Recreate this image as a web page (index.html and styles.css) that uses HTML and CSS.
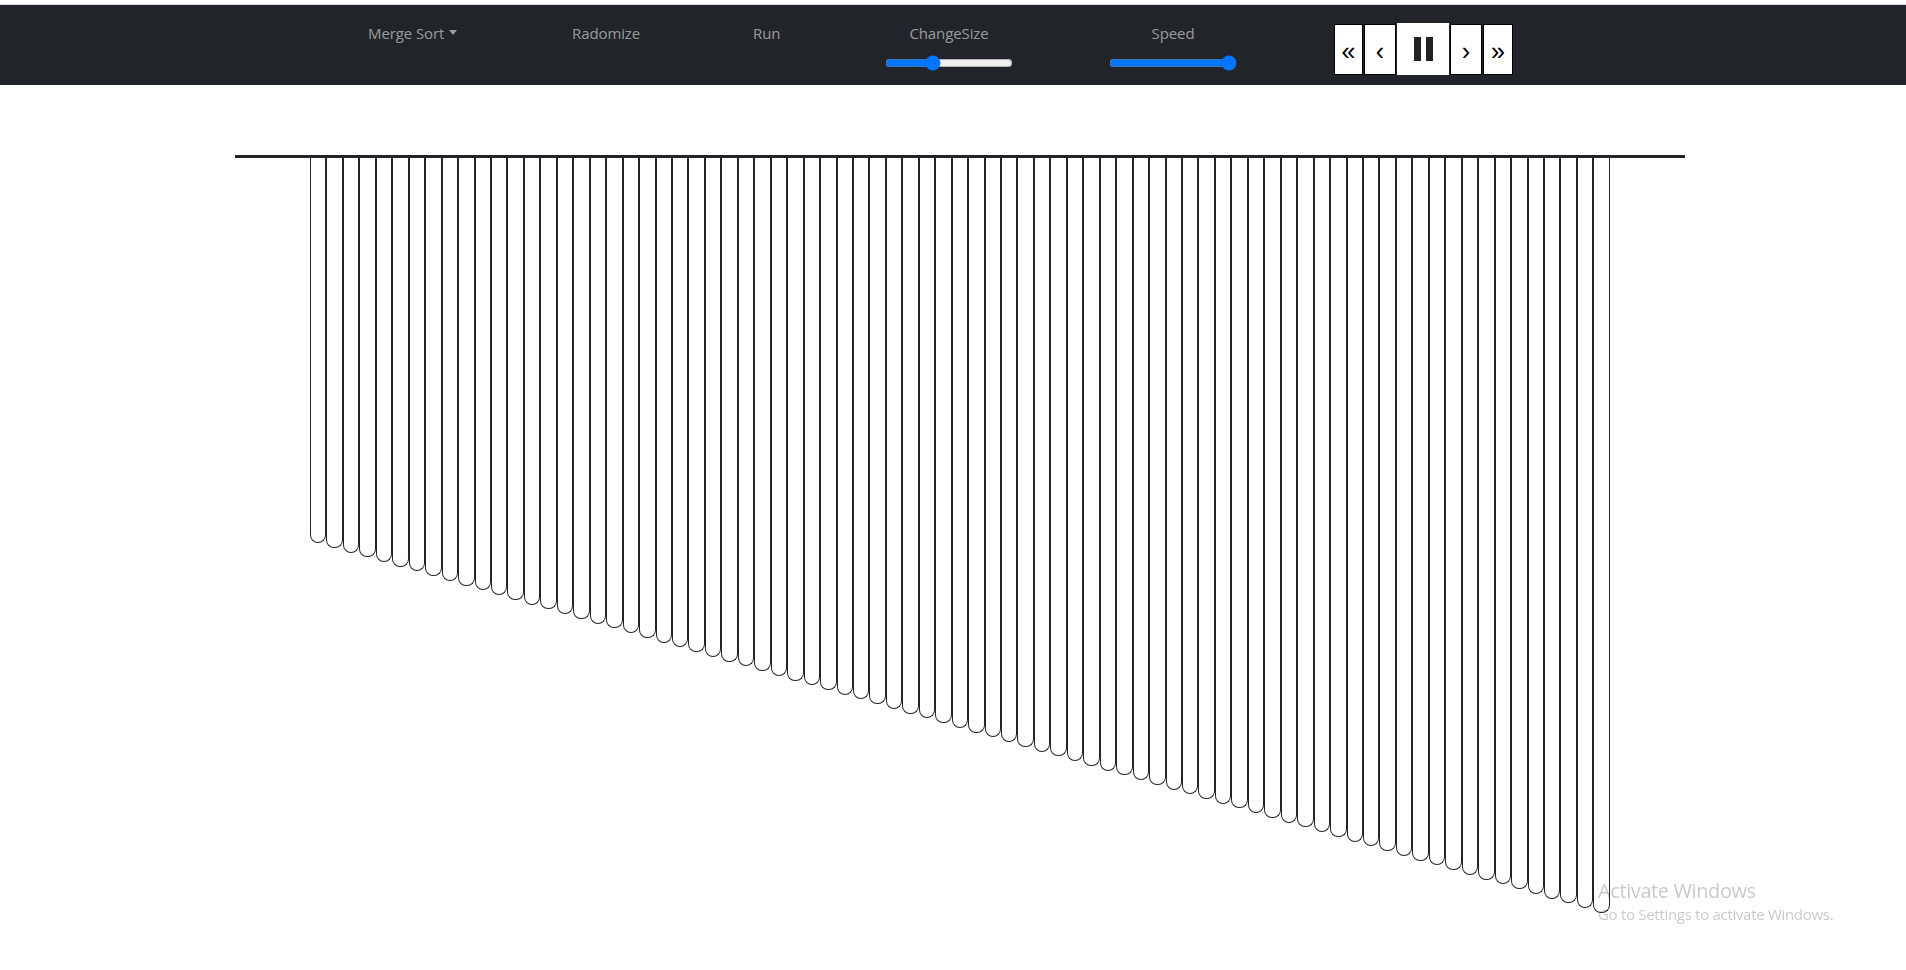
FILE: index.html
```html
<!DOCTYPE html>
<html lang="en">
<head>
<meta charset="utf-8">
<title>Sorting Visualizer</title>
<link rel="stylesheet" href="styles.css">
</head>
<body>
<div class="topline"></div>
<nav class="navbar">
  <div class="slot slot-dd"><span class="nav-link dropdown-toggle">Merge Sort</span></div>
  <div class="slot slot-rand"><span class="nav-link">Radomize</span></div>
  <div class="slot slot-run"><span class="nav-link">Run</span></div>
  <div class="slot slot-size control">
    <span class="nav-link">ChangeSize</span>
    <input class="range" type="range" min="0" max="100" value="36">
  </div>
  <div class="slot slot-speed control">
    <span class="nav-link">Speed</span>
    <input class="range" type="range" min="0" max="100" value="100">
  </div>
  <div class="btn-group">
    <button class="btn btn-first">&laquo;</button>
    <button class="btn btn-prev">&lsaquo;</button>
    <button class="btn btn-pause"><span class="pbar"></span><span class="pbar"></span></button>
    <button class="btn btn-next">&rsaquo;</button>
    <button class="btn btn-last">&raquo;</button>
  </div>
</nav>
<main class="stage">
  <div class="axis"></div>
  <div class="bars">
    <div class="bar" style="height:385.0px"></div>
    <div class="bar" style="height:389.7px"></div>
    <div class="bar" style="height:394.5px"></div>
    <div class="bar" style="height:399.2px"></div>
    <div class="bar" style="height:404.0px"></div>
    <div class="bar" style="height:408.7px"></div>
    <div class="bar" style="height:413.4px"></div>
    <div class="bar" style="height:418.2px"></div>
    <div class="bar" style="height:422.9px"></div>
    <div class="bar" style="height:427.7px"></div>
    <div class="bar" style="height:432.4px"></div>
    <div class="bar" style="height:437.1px"></div>
    <div class="bar" style="height:441.9px"></div>
    <div class="bar" style="height:446.6px"></div>
    <div class="bar" style="height:451.4px"></div>
    <div class="bar" style="height:456.1px"></div>
    <div class="bar" style="height:460.8px"></div>
    <div class="bar" style="height:465.6px"></div>
    <div class="bar" style="height:470.3px"></div>
    <div class="bar" style="height:475.1px"></div>
    <div class="bar" style="height:479.8px"></div>
    <div class="bar" style="height:484.5px"></div>
    <div class="bar" style="height:489.3px"></div>
    <div class="bar" style="height:494.0px"></div>
    <div class="bar" style="height:498.8px"></div>
    <div class="bar" style="height:503.5px"></div>
    <div class="bar" style="height:508.2px"></div>
    <div class="bar" style="height:513.0px"></div>
    <div class="bar" style="height:517.7px"></div>
    <div class="bar" style="height:522.5px"></div>
    <div class="bar" style="height:527.2px"></div>
    <div class="bar" style="height:531.9px"></div>
    <div class="bar" style="height:536.7px"></div>
    <div class="bar" style="height:541.4px"></div>
    <div class="bar" style="height:546.2px"></div>
    <div class="bar" style="height:550.9px"></div>
    <div class="bar" style="height:555.6px"></div>
    <div class="bar" style="height:560.4px"></div>
    <div class="bar" style="height:565.1px"></div>
    <div class="bar" style="height:569.9px"></div>
    <div class="bar" style="height:574.6px"></div>
    <div class="bar" style="height:579.3px"></div>
    <div class="bar" style="height:584.1px"></div>
    <div class="bar" style="height:588.8px"></div>
    <div class="bar" style="height:593.6px"></div>
    <div class="bar" style="height:598.3px"></div>
    <div class="bar" style="height:603.0px"></div>
    <div class="bar" style="height:607.8px"></div>
    <div class="bar" style="height:612.5px"></div>
    <div class="bar" style="height:617.3px"></div>
    <div class="bar" style="height:622.0px"></div>
    <div class="bar" style="height:626.7px"></div>
    <div class="bar" style="height:631.5px"></div>
    <div class="bar" style="height:636.2px"></div>
    <div class="bar" style="height:641.0px"></div>
    <div class="bar" style="height:645.7px"></div>
    <div class="bar" style="height:650.4px"></div>
    <div class="bar" style="height:655.2px"></div>
    <div class="bar" style="height:659.9px"></div>
    <div class="bar" style="height:664.7px"></div>
    <div class="bar" style="height:669.4px"></div>
    <div class="bar" style="height:674.1px"></div>
    <div class="bar" style="height:678.9px"></div>
    <div class="bar" style="height:683.6px"></div>
    <div class="bar" style="height:688.4px"></div>
    <div class="bar" style="height:693.1px"></div>
    <div class="bar" style="height:697.8px"></div>
    <div class="bar" style="height:702.6px"></div>
    <div class="bar" style="height:707.3px"></div>
    <div class="bar" style="height:712.1px"></div>
    <div class="bar" style="height:716.8px"></div>
    <div class="bar" style="height:721.5px"></div>
    <div class="bar" style="height:726.3px"></div>
    <div class="bar" style="height:731.0px"></div>
    <div class="bar" style="height:735.8px"></div>
    <div class="bar" style="height:740.5px"></div>
    <div class="bar" style="height:745.2px"></div>
    <div class="bar" style="height:750.0px"></div>
    <div class="bar" style="height:754.7px"></div>
  </div>
</main>
<div class="watermark">
  <div class="wm-title">Activate Windows</div>
  <div class="wm-sub">Go to Settings to activate Windows.</div>
</div>
</body>
</html>
```
FILE: styles.css
```css
html, body {
  margin: 0;
  padding: 0;
  background: #fff;
}
body {
  font-family: "Open Sans", "Noto Sans", sans-serif;
  font-size: 16px;
  line-height: 24px;
  color: #212529;
  overflow: hidden;
}
.topline {
  height: 4px;
  border-bottom: 1px solid #dcdcdc;
}
.navbar {
  height: 80px;
  box-sizing: border-box;
  background: #212529;
  display: flex;
  align-items: flex-start;
  padding: 16px 0 0 368px;
}
.nav-link {
  color: rgba(255, 255, 255, 0.55);
  font-size: 15px;
  white-space: nowrap;
  letter-spacing: -0.1px;
}
.dropdown-toggle::after {
  content: "";
  display: inline-block;
  margin-left: 5px;
  vertical-align: 4px;
  border-top: 5px solid;
  border-left: 4.5px solid transparent;
  border-right: 4.5px solid transparent;
}
.slot-dd { width: 204px; }
.slot-rand { width: 181px; }
.slot-run { width: 132px; }
.control {
  display: flex;
  flex-direction: column;
  align-items: center;
  width: 128px;
}
.slot-size { margin-right: 96px; }
.slot-speed { margin-right: 97px; }
.range {
  width: 128px;
  height: 16px;
  margin: 10px 0 0;
  padding: 0;
  accent-color: #0075ff;
}
.btn-group {
  display: flex;
  gap: 1px;
  margin-top: 2px;
  align-items: flex-start;
}
.btn {
  margin: 0;
  padding: 0;
  height: 51px;
  margin-top: 1px;
  background: #fff;
  border: 1px solid #000;
  color: #000;
  font-family: "Liberation Sans", sans-serif;
  font-size: 25px;
  line-height: 1;
  display: flex;
  align-items: center;
  justify-content: center;
  padding-top: 4px;
  box-sizing: border-box;
}
.btn-first { width: 29px; }
.btn-prev { width: 32px; }
.btn-next { width: 32px; }
.btn-last { width: 30px; }
.btn-pause {
  width: 52px;
  height: 52px;
  margin-top: 0;
  border: none;
  gap: 5px;
  padding-top: 0;
}
.pbar {
  display: block;
  width: 7px;
  height: 24px;
  background: #222;
}
.stage {
  padding: 70px 0 0 235px;
}
.axis {
  width: 1450px;
  height: 3px;
  background: #212529;
}
.bars {
  display: flex;
  align-items: flex-start;
  width: 1300px;
  margin-left: 75px;
}
.bar {
  flex: 1 1 0;
  box-sizing: border-box;
  border: 1px solid #212529;
  border-top: none;
  border-radius: 0 0 8px 8px;
  background: #fff;
}
.watermark {
  position: fixed;
  left: 1598px;
  top: 878px;
  color: rgba(0, 0, 0, 0.22);
  font-family: "Open Sans", sans-serif;
  pointer-events: none;
}
.wm-title {
  font-size: 20px;
  line-height: 26px;
  letter-spacing: -0.4px;
}
.wm-sub {
  font-size: 15px;
  line-height: 20px;
  letter-spacing: -0.3px;
}
```
